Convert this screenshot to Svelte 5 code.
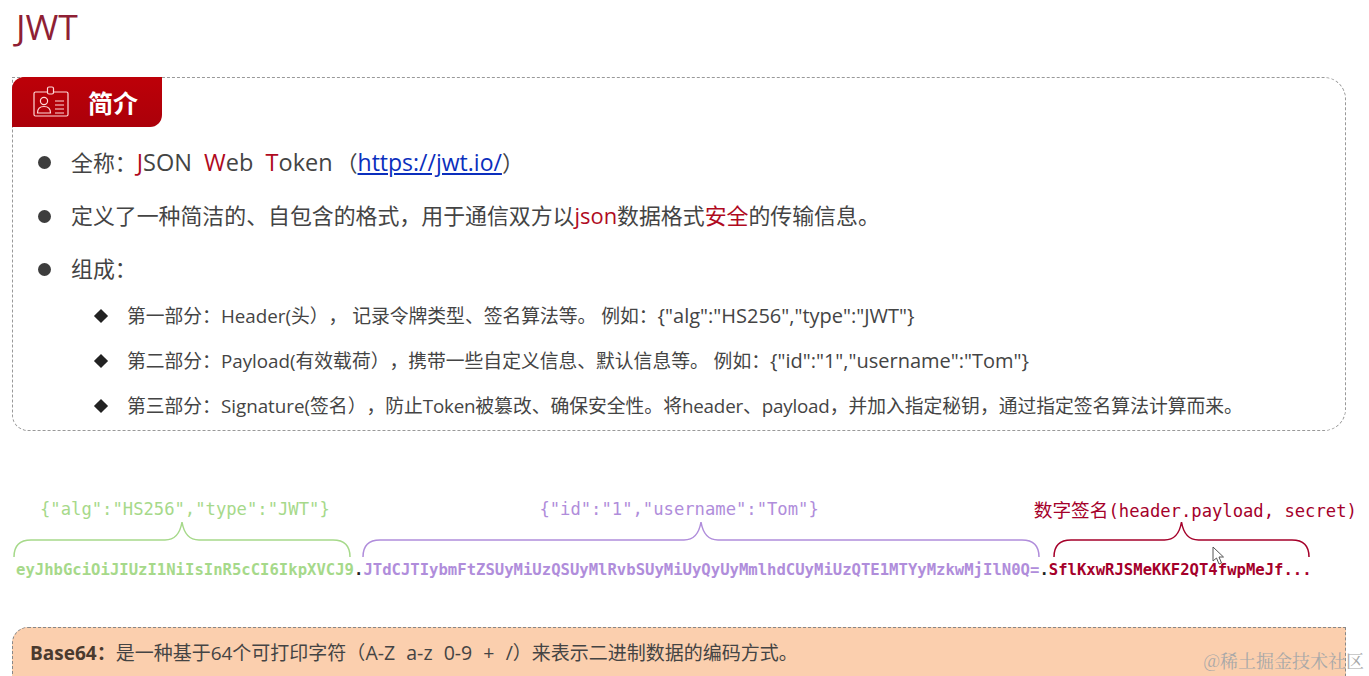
<script>
  const parts = [
    { cls: 'head', label: '{"alg":"HS256","type":"JWT"}', token: 'eyJhbGciOiJIUzI1NiIsInR5cCI6IkpXVCJ9', width: 338, labelX: 24, braceX: -3, braceW: 338 },
    { cls: 'body', label: '{"id":"1","username":"Tom"}', token: 'JTdCJTIybmFtZSUyMiUzQSUyMlRvbSUyMiUyQyUyMmlhdCUyMiUzQTE1MTYyMzkwMjIlN0Q=', width: 676, labelX: 176, braceX: -1, braceW: 678 },
    { cls: 'sign', label: '(header.payload, secret)', cn: '数字签名', token: 'SflKxwRJSMeKKF2QT4fwpMeJf...', width: 263, labelX: -15, braceX: 4, braceW: 257 },
  ]

  // curly brace drawn over the token, tip in the middle
  function brace(w) {
    const m = w / 2
    return `M1 36C1 26 6 19 18 19H${m - 17}C${m - 7} 19 ${m - 2} 13 ${m} 1C${m + 2} 13 ${m + 7} 19 ${m + 17} 19H${w - 18}C${w - 6} 19 ${w - 1} 26 ${w - 1} 36`
  }
</script>

<main class="page">
  <h1>JWT</h1>

  <section class="card">
    <div class="tab">
      <svg width="36" height="32" viewBox="0 0 36 32" fill="none" stroke="#ffd9d9" stroke-width="1.2">
        <rect x="1" y="6" width="34" height="24" rx="1.5" />
        <rect x="14.5" y="1" width="6" height="7" rx="1.5" fill="#b3000a" />
        <circle cx="11" cy="15" r="3.6" />
        <path d="M4.500 27c0-5 3-6.500 6.500-6.500s6.500 1.500 6.500 6.500z" />
        <path d="M22 15h9M22 19h9M22 23h9M22 27h9" />
      </svg>
      <span>简介</span>
    </div>

    <ul class="main-list">
      <li>全称：<span class="en"><b>J</b>SON&nbsp; <b>W</b>eb&nbsp; <b>T</b>oken</span>（<a href="https://jwt.io/">https://jwt.io/</a>）</li>
      <li>定义了一种简洁的、自包含的格式，用于通信双方以<b>json</b>数据格式<b>安全</b>的传输信息。</li>
      <li>组成：</li>
    </ul>
    <ul class="sub-list">
      <li>第一部分：Header(头）， 记录令牌类型、签名算法等。 例如：<span class="en">{'{'}"alg":"HS256","type":"JWT"{'}'}</span></li>
      <li>第二部分：Payload(有效载荷），携带一些自定义信息、默认信息等。 例如：<span class="en">{'{'}"id":"1","username":"Tom"{'}'}</span></li>
      <li>第三部分：Signature(签名），防止<span class="tight">Token</span>被篡改、确保安全性。将<span class="tight">header</span>、<span class="tight">payload</span>，并加入指定秘钥，通过指定签名算法计算而来。</li>
    </ul>
  </section>

  <section class="token-row">
    {#each parts as part, i}
      {#if i > 0}<span class="dot">.</span>{/if}
      <div class="part {part.cls}" style="width: {part.width}px">
        <div class="label" style="margin-left: {part.labelX}px">{#if part.cn}<span class="cn">{part.cn}</span>{/if}{part.label}</div>
        <svg width={part.braceW} height="37" viewBox="0 0 {part.braceW} 37" fill="none" style="margin-left: {part.braceX}px">
          <path d={brace(part.braceW)} stroke="currentColor" stroke-width="1.5" />
        </svg>
        <div class="token">{part.token}</div>
      </div>
    {/each}
  </section>

  <section class="note">
    <strong>Base64：</strong>是一种基于64个可打印字符（<span class="range">A-Z&nbsp; a-z&nbsp; 0-9&nbsp; +&nbsp; /</span>）来表示二进制数据的编码方式。
  </section>

  <svg class="cursor" width="13" height="20" viewBox="0 0 13 20">
    <path d="M1 1v14l3.500-3 2.500 6 2.500-1-2.500-6h4.500z" fill="#fff" stroke="#555" stroke-width="1" />
  </svg>
  <div class="watermark">@稀土掘金技术社区</div>
</main>

<style>
  :global(body) {
    margin: 0;
    background: #fff;
    overflow: hidden;
  }

  .page {
    position: relative;
    height: 676px;
    overflow: hidden;
    padding: 0 23px 0 12px;
    font-family: "Open Sans", "Noto Sans CJK SC", sans-serif;
    color: #333;
    text-spacing-trim: space-all;
  }

  h1 {
    margin: 0;
    height: 77px;
    padding: 4px 0 0 4px;
    box-sizing: border-box;
    font-size: 35.500px;
    line-height: 44px;
    font-weight: 400;
    color: #8f1f35;
  }

  .card {
    height: 354px;
    box-sizing: border-box;
    border: 1px dashed #999;
    border-radius: 0 22px 22px 16px;
  }

  .tab {
    display: flex;
    align-items: center;
    gap: 19px;
    width: 150px;
    height: 50px;
    margin: -1px 0 0 -1px;
    padding: 0 0 0 21px;
    box-sizing: border-box;
    background: linear-gradient(#bd0008, #ab000a);
    border-radius: 12px 0 12px 0;
    color: #fff;
    font-size: 25px;
    font-weight: 700;
  }

  ul {
    list-style: none;
    margin: 0;
    padding: 0;
  }

  .main-list {
    margin-top: 20px;
    display: flex;
    flex-direction: column;
    gap: 23px;
  }

  .main-list li {
    position: relative;
    padding-left: 58px;
    font-size: 21.900px;
    line-height: 30px;
    color: #444;
  }

  .main-list li::before {
    content: '';
    position: absolute;
    left: 25px;
    top: 9px;
    width: 13px;
    height: 13px;
    border-radius: 50%;
    background: #3d3d3d;
  }

  .main-list .en {
    font-size: 23.500px;
    padding-right: 3px;
  }

  .main-list b {
    font-weight: 400;
    color: #b00a1e;
  }

  .main-list a {
    font-size: 23px;
    color: #0b2fbd;
  }

  .sub-list {
    margin-top: 19px;
    display: flex;
    flex-direction: column;
    gap: 19px;
  }

  .sub-list li {
    position: relative;
    padding-left: 114px;
    font-size: 18.800px;
    line-height: 26px;
    color: #444;
    white-space: nowrap;
  }

  .sub-list .en {
    font-size: 20px;
  }

  .sub-list .tight {
    letter-spacing: -0.2px;
  }

  .sub-list li::before {
    content: '';
    position: absolute;
    left: 83px;
    top: 8px;
    width: 10px;
    height: 10px;
    background: #222;
    transform: rotate(45deg);
  }

  .token-row {
    display: flex;
    align-items: flex-end;
    margin-top: 66px;
    padding-left: 4px;
    font-family: "DejaVu Sans Mono", monospace;
  }

  .dot {
    width: 9.390px;
    font-size: 15.600px;
    line-height: 20px;
    font-weight: 700;
    color: #222;
  }

  .part {
    display: flex;
    flex-direction: column;
    align-items: flex-start;
    flex: none;
  }

  .part svg {
    display: block;
    overflow: visible;
  }

  .label {
    height: 24px;
    font-size: 17.200px;
    line-height: 24px;
    white-space: nowrap;
  }

  .cn {
    font-family: "Noto Sans CJK SC", sans-serif;
    font-size: 18.700px;
  }

  .token {
    margin-top: 2px;
    font-size: 15.600px;
    line-height: 20px;
    font-weight: 700;
    white-space: nowrap;
  }

  .head { color: #a6d98a; }
  .body { color: #b08ddb; }
  .sign { color: #a5002a; }

  .note {
    margin-top: 47px;
    height: 60px;
    box-sizing: border-box;
    padding: 12px 0 0 17px;
    border: 1px dashed #888;
    border-radius: 16px 0 0 0;
    background: #fbcfae;
    font-size: 19px;
    line-height: 26px;
    color: #444;
  }

  .note strong {
    color: #4a3a2e;
  }

  .note .range {
    font-size: 19.500px;
    word-spacing: 0.500px;
  }

  .cursor {
    position: absolute;
    left: 1212px;
    top: 546px;
  }

  .watermark {
    position: absolute;
    right: 5px;
    top: 648px;
    font-family: "Noto Serif CJK SC", "Noto Sans CJK SC", sans-serif;
    font-size: 18px;
    line-height: 24px;
    color: #a8a8a8;
  }
</style>
